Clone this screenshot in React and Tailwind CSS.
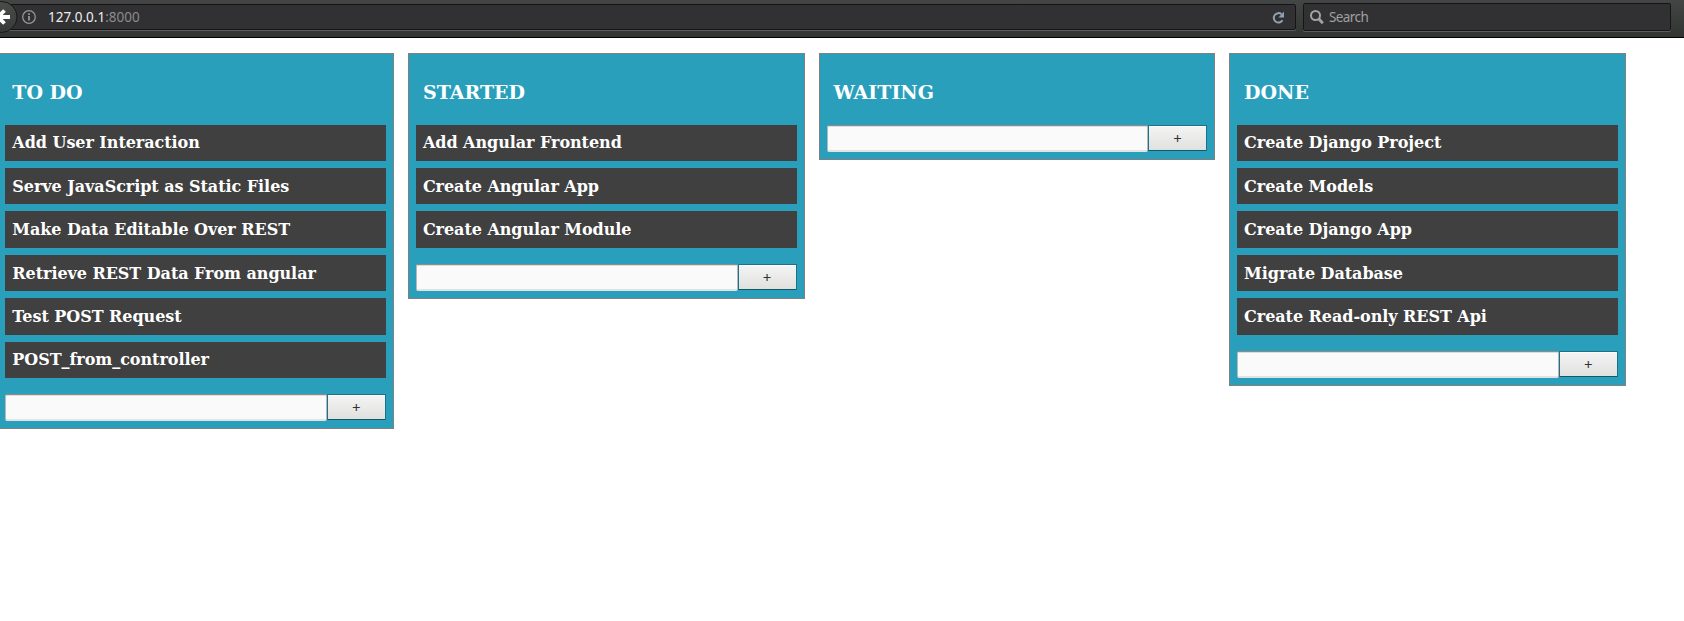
const columns = [
  { title: 'TO DO', tasks: ['Add User Interaction', 'Serve JavaScript as Static Files', 'Make Data Editable Over REST', 'Retrieve REST Data From angular', 'Test POST Request', 'POST_from_controller'] },
  { title: 'STARTED', tasks: ['Add Angular Frontend', 'Create Angular App', 'Create Angular Module'] },
  { title: 'WAITING', tasks: [] },
  { title: 'DONE', tasks: ['Create Django Project', 'Create Models', 'Create Django App', 'Migrate Database', 'Create Read-only REST Api'] },
];

function Toolbar() {
  return (
    <header className="flex h-[38px] items-start border-b border-black bg-linear-to-b from-[#444645] to-[#323432] font-['Noto_Sans',sans-serif] text-[13.500px]">
      <div className="relative mt-1 flex h-[26px] w-[1296px] items-center rounded-r-[2px] border border-[#151515] bg-[#313133] shadow-[0_1px_0_#5b5d5c]">
        <svg className="absolute -left-[17px] -top-[5px]" width="34" height="34" viewBox="0 0 34 34">
          <defs>
            <linearGradient id="back" x1="0" y1="0" x2="0" y2="1">
              <stop offset="0" stopColor="#4b4d4b" />
              <stop offset="1" stopColor="#363937" />
            </linearGradient>
          </defs>
          <circle cx="17.500" cy="17" r="15.500" fill="url(#back)" stroke="#171817" />
          <path d="M26 17H14M20.500 10.500l-6.500 6.500 6.500 6.500" fill="none" stroke="#fff" strokeWidth="3.800" />
        </svg>
        <svg className="ml-[20px]" width="16" height="16" viewBox="0 0 16 16">
          <circle cx="8" cy="8" r="6.300" fill="none" stroke="#959595" strokeWidth="1.300" />
          <path d="M8 7v4.500M8 4.300v1.700" stroke="#959595" strokeWidth="1.800" />
        </svg>
        <span className="ml-[11px] pt-px tracking-[0px] text-[#eeeeec]">127.0.0.1<span className="text-[#8b8b8c]">:8000</span></span>
        <svg className="ml-auto mr-[10px]" width="13" height="13" viewBox="0 0 13 13">
          <path d="M10.500 9.300A4.700 4.700 0 1 1 9.500 3.200" fill="none" stroke="#91a0b0" strokeWidth="2" />
          <path d="M12 0.500v6H6.500Z" fill="#91a0b0" />
        </svg>
      </div>
      <div className="ml-[7px] mt-[3px] flex h-7 w-[368px] items-center rounded-[2px] border border-[#151515] bg-[#313133] pl-[5px] shadow-[0_1px_0_#5b5d5c]">
        <svg width="15" height="15" viewBox="0 0 15 15">
          <circle cx="6.500" cy="5.500" r="4.500" fill="none" stroke="#a3a3a3" strokeWidth="2" />
          <path d="M9.500 8.500l4.300 4.700" stroke="#a3a3a3" strokeWidth="2.800" />
        </svg>
        <span className="ml-[5px] pt-px tracking-[-0.6px] text-[#a0a0a0]">Search</span>
      </div>
    </header>
  );
}

function Column({ title, tasks }) {
  return (
    <section className="w-[396.600px] shrink-0 border border-[#808080] bg-[#2a9fbc] px-[7px] pb-[7px] font-['DejaVu_Serif',serif] font-bold text-white">
      <h2 className="flex h-[70.600px] items-center pl-[7px] pt-[6px] text-[19px] leading-none">{title}</h2>
      <ul className="flex flex-col gap-[7px]">
        {tasks.map((task) => (
          <li key={task} className="h-[36.400px] bg-[#404040] pl-[7px] pt-[0.800px] text-[16px] leading-[35px] tracking-[-0.050px]">{task}</li>
        ))}
      </ul>
      <form className={tasks.length ? 'mt-4 flex h-[27px]' : 'mt-[0.400px] flex h-[27px]'}>
        <input aria-label={title} className="h-[27px] min-w-0 flex-1 rounded-[2px] border border-b-2 border-t-[#8c8c8a] border-x-[#b5b9b8] border-b-[#dfe3e2] bg-[#fafafa] shadow-[inset_0_1px_0_#dddddd]" />
        <button type="button" className="h-[26px] w-[59px] rounded-[1px] border border-[#1b7189] border-b-[#14566a] bg-linear-to-b from-[#f4f4f4] to-[#e0e1df] pt-px text-[15px] font-normal leading-none text-[#333] shadow-[inset_0_1px_0_#fff] font-['Noto_Sans',sans-serif]">+</button>
      </form>
    </section>
  );
}

export default function App() {
  return (
    <div className="h-[621px] overflow-hidden bg-white">
      <Toolbar />
      <main className="-ml-[2.700px] mt-[15px] flex items-start gap-[14px]">
        {columns.map((column) => <Column key={column.title} {...column} />)}
      </main>
    </div>
  );
}
